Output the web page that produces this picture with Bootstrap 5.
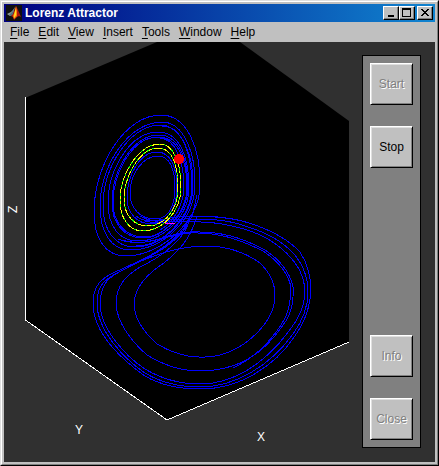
<!DOCTYPE html>
<html lang="en">
<head>
<meta charset="utf-8">
<meta name="viewport" content="width=device-width, initial-scale=1">
<title>Lorenz Attractor</title>
<link href="https://cdn.jsdelivr.net/npm/bootstrap@5.3.0/dist/css/bootstrap.min.css" rel="stylesheet">
<style>
body { font-family: "Liberation Sans", Arial, sans-serif; font-size: 12px; line-height: 16px; background: #c0c0c0; color: #000; }
.win { border: 1px solid; border-color: #dfdfdf #000 #000 #dfdfdf; }
.win-inner { border: 1px solid; border-color: #fff #808080 #808080 #fff; padding: 2px; }
.titlebar { height: 18px; padding: 0 2px; background: linear-gradient(90deg, #000080, #1084d0); }
.titlebar h1 { font-size: 12px; line-height: 18px; margin-left: 3px; }
.face { background: #c0c0c0; color: #000; border: 1px solid; border-color: #fff #000 #000 #fff; box-shadow: inset -1px -1px #808080; padding: 0; border-radius: 0; }
.caption-btn { width: 16px; height: 14px; }
.caption-close { margin-left: 2px; }
.caption-btn svg { display: block; margin: auto; }
.menus { height: 20px; gap: 9px; padding: 0 6px; }
.menus a { color: #000; text-decoration: none; line-height: 20px; }
.menus u { text-underline-offset: 2px; }
.figure-area { background: #303030; }
.plot { min-width: 0; }
.plot svg { display: block; width: 100%; height: 100%; }
.side { background: #808080; border: 1px solid #000; padding: 7px; margin: 13px 14px 14px 0; }
.push { width: 43px; height: 42px; box-shadow: inset 1px 1px #dfdfdf, inset -1px -1px #808080; }
.push:disabled { color: #808080; text-shadow: 1px 1px #fff; }
.gap-push { gap: 21px; }
</style>
<script src="https://cdn.jsdelivr.net/npm/bootstrap@5.3.0/dist/js/bootstrap.bundle.min.js"></script>
</head>
<body>
<div class="win min-vh-100 d-flex">
<div class="win-inner flex-fill d-flex flex-column">
  <header class="titlebar d-flex align-items-center text-white">
    <svg width="16" height="16" viewBox="0 0 16 16" aria-hidden="true">
      <path fill="#101010" d="M0 0h16v16H0z"/>
      <path fill="#909c9c" d="M1 9l4-2 2-2 2-3-2 7-3 2z"/>
      <path fill="#507080" d="M3 10l3-3 2-3-1 6-2 1z"/>
      <path fill="#b01810" d="M5 11l2-2 3-8 2 4 3 7-2-1-2 1-3 3-1-3z"/>
      <path fill="#ff8010" d="M7 11l2-5 1-5 1 5 0 5-3 3z"/>
      <path fill="#ffe020" d="M8 11l1-5 1-3 0 7-2 3z"/>
    </svg>
    <h1 class="fw-bold mb-0 flex-fill">Lorenz Attractor</h1>
    <button class="face caption-btn" aria-label="Minimize"><svg width="12" height="10" viewBox="0 0 12 10"><path d="M3 7h6v2H3z"/></svg></button>
    <button class="face caption-btn" aria-label="Maximize"><svg width="12" height="10" viewBox="0 0 12 10" shape-rendering="crispEdges"><path fill-rule="evenodd" d="M1 0h9v9H1zM2 2v6h7V2z"/></svg></button>
    <button class="face caption-btn caption-close" aria-label="Close window"><svg width="12" height="10" viewBox="0 0 12 10" shape-rendering="crispEdges"><path d="M2 1h2v1h1v1h2V2h1V1h2v1H9v1H8v1H7v1h1v1h1v1h1v1H8V7H7V6H5v1H4v1H2V7h1V6h1V5h1V4H4V3H3V2H2z"/></svg></button>
  </header>
  <nav class="menus d-flex" aria-label="Menu bar">
    <a href="#"><u>F</u>ile</a><a href="#"><u>E</u>dit</a><a href="#"><u>V</u>iew</a><a href="#"><u>I</u>nsert</a><a href="#"><u>T</u>ools</a><a href="#"><u>W</u>indow</a><a href="#"><u>H</u>elp</a>
  </nav>
  <main class="figure-area flex-fill d-flex">
    <div class="plot flex-fill">
      <svg viewBox="4 42 358 420" role="img" aria-label="Three-dimensional trajectory with axes X, Y and Z">
        <path d="M25 98L157 42H240L349 121V342L167 420L25 320Z"/>
        <g fill="none" shape-rendering="crispEdges">
          <path stroke="#fff" d="M25.500 97V320L167 420L349 342"/>
          <g stroke="#00f">
            <path d="M161 115C188 115 201 150 200 187C199 222 160 256 126 256C105 256 94 238 94 212C94 165 125 115 161 115"/>
            <path d="M162 122C184 122 196 154 195 186C194 221 162 250 130 250C111 250 100 232 100 206C100 165 129 122 162 122"/>
            <path d="M160 125C182 125 194 156 193 187C192 218 163 247 135 247C115 247 103 230 103 206C103 167 130 125 160 125"/>
            <path d="M162 126C183 126 192 156 192 187C191 218 163 246 136 246"/>
            <path d="M158 132C180 132 189 158 189 187C189 217 163 241 138 241C119 241 108 226 108 203C108 170 130 132 158 132"/>
            <path d="M159 135C179 135 188 160 188 187C188 212 164 238 143 238C124 238 112 223 112 203C112 170 133 135 159 135"/>
            <path d="M158 137C178 137 187 160 187 187C187 212 165 237 144 237C125 237 113 222 113 203C113 172 133 137 158 137"/>
            <path d="M160 138C175 139 184 160 184 188C183 206 174 222 160 230"/>
            <path d="M157 152C171 152 177 168 177 188C177 208 167 224 152 224C137 224 127 213 127 198C127 175 140 152 157 152"/>
            <path d="M158 156C170 156 175 170 175 188C175 207 168 219 155 219C140 219 130 208 130 193C130 174 143 156 158 156"/>
            <path d="M136 216C150 227 164 216 190 216C212 216 232 217 252 224C270 230 287 238 300 252C308 264 311 278 311 292C309 311 304 323 295 336C275 366 240 389 200 389C180 389 162 386 145 376C125 362 93 335 93 303C93 286 101 279 113 273C146 258 184 243 193 213L197 195"/>
            <path d="M140 216C157 226 166 218 190 219C212 219 230 220 248 227C268 233 283 242 294 254C304 266 308 280 308 292C308 310 301 323 293 334C270 366 235 387 200 387C180 387 160 382 145 373C123 358 97 330 97 303C97 287 103 281 115 274C146 258 179 243 190 218"/>
            <path d="M145 221C158 225 168 220 190 222C212 221 227 224 244 229C264 235 280 245 291 258C301 269 305 282 305 294C304 310 297 321 289 331C264 365 232 384 200 384C180 384 160 378 145 369C125 356 100 328 100 303C101 287 105 280 119 272C145 259 176 246 188 224"/>
            <path d="M118 239C145 250 171 232 190 232C220 231 241 237 265 250C280 260 290 272 293 287C294 302 291 315 283 325C262 357 233 371 200 371C181 371 165 366 147 355C132 342 117 323 116 304C116 285 127 275 140 267C157 259 180 244 188 225"/>
            <path d="M122 240C146 248 168 234 190 233C218 232 239 239 263 251C278 261 288 273 291 287C291 302 289 314 281 325C268 345 250 360 233 368"/>
            <path d="M126 267C154 256 172 247 205 246C229 246 246 253 260 263C271 274 275 284 275 295C275 306 271 316 264 325C249 344 227 357 205 357C189 358 172 353 157 344C143 331 134 319 134 302C136 284 150 272 164 263C177 252 190 241 197 216"/>
          </g>
          <g stroke="#0f0">
            <path id="orbit-a" d="M160 144C174 144 181 164 181 187C181 212 162 231 143 231C128 231 120 217 120 200C120 174 139 144 160 144"/>
            <path id="orbit-b" d="M158 148C173 148 178 167 178 188C178 211 163 226 148 226C133 226 124 214 124 199C124 176 140 148 158 148"/>
          </g>
          <g stroke="#ff0" stroke-dasharray="4 2 7 3 2 2">
            <use href="#orbit-a"/>
            <use href="#orbit-b"/>
          </g>
          <path stroke="#f0f" d="M165 224L175 223"/>
        </g>
        <circle cx="179" cy="159" r="5" fill="#f00" shape-rendering="crispEdges"/>
        <g fill="#fff" font-size="12">
          <text x="75" y="434">Y</text>
          <text x="257" y="441">X</text>
          <text transform="translate(17 213) rotate(-90)">Z</text>
        </g>
      </svg>
    </div>
    <aside class="side d-flex flex-column justify-content-between">
      <div class="d-flex flex-column gap-push">
        <button class="face push" disabled>Start</button>
        <button class="face push">Stop</button>
      </div>
      <div class="d-flex flex-column gap-push">
        <button class="face push" disabled>Info</button>
        <button class="face push" disabled>Close</button>
      </div>
    </aside>
  </main>
</div>
</div>
</body>
</html>
